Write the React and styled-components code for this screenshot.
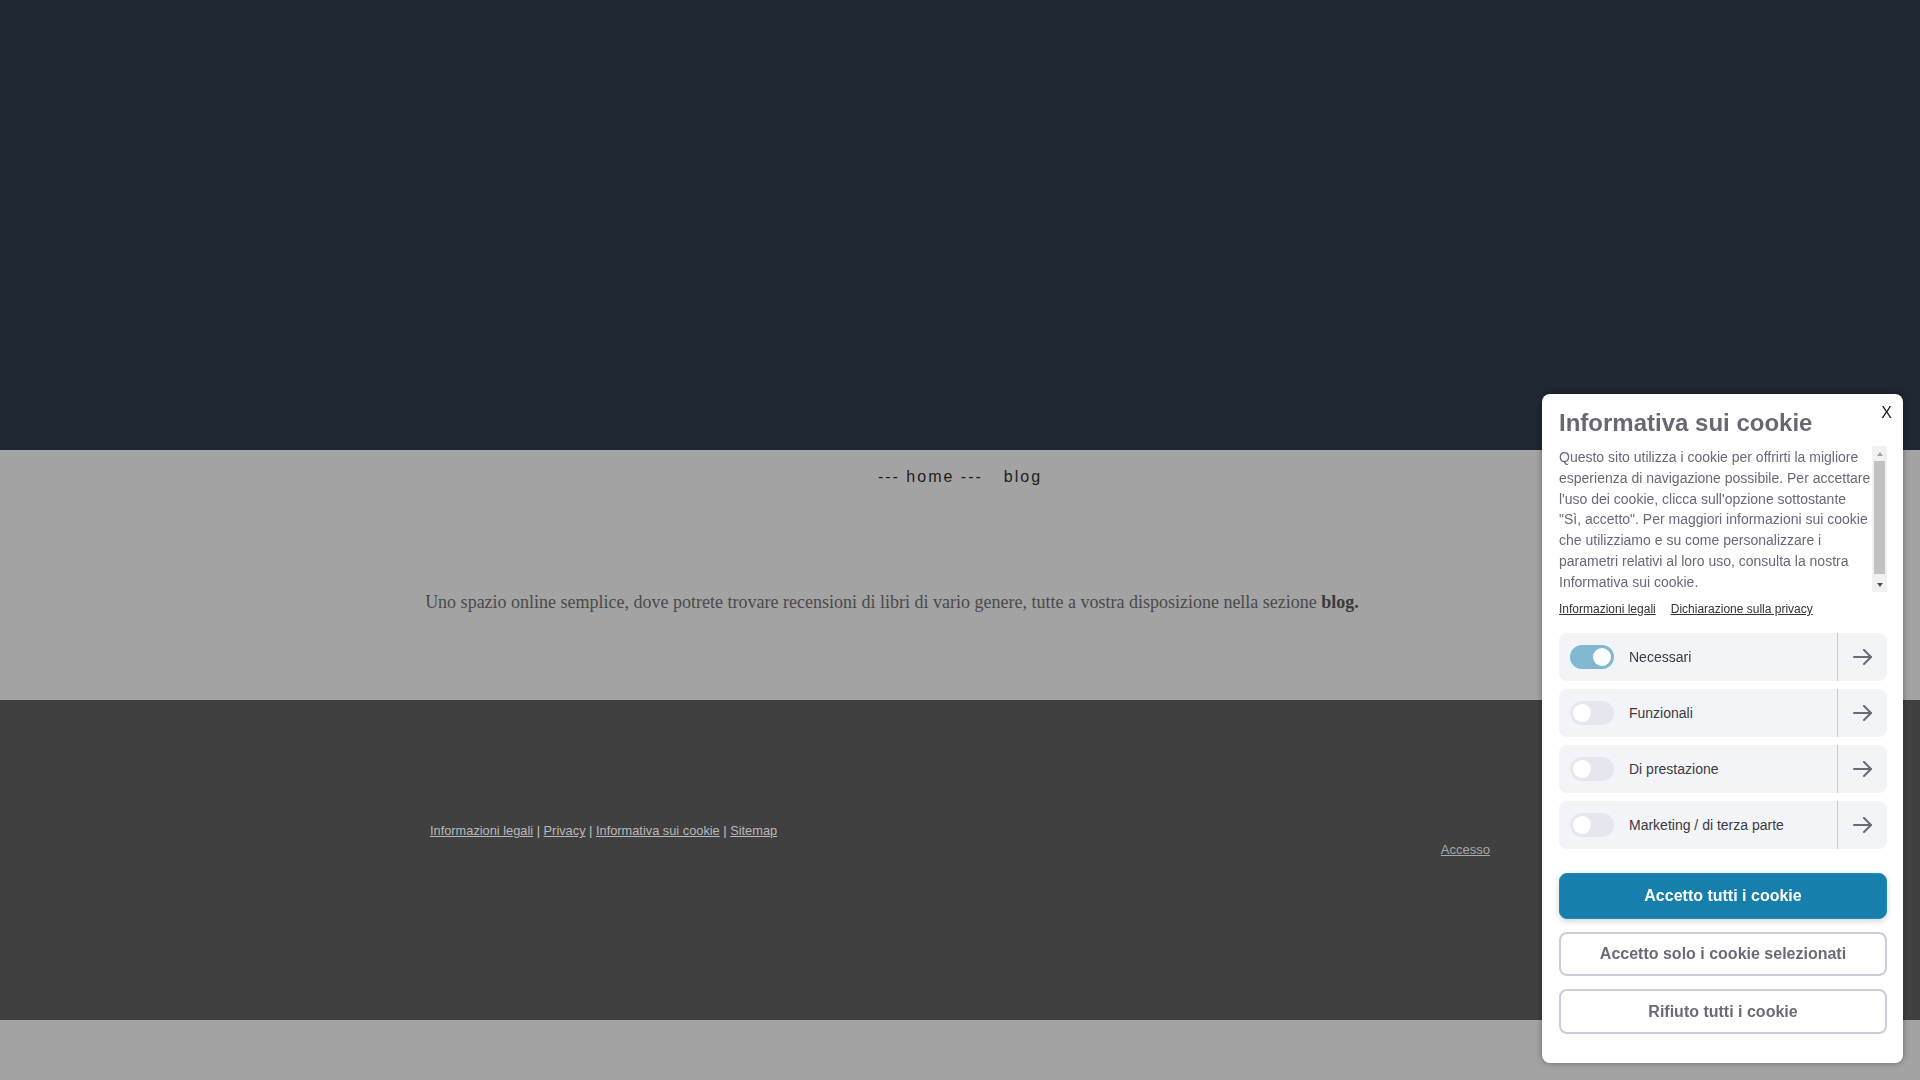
import React from "react";
import styled, { createGlobalStyle } from "styled-components";

const Global = createGlobalStyle`
  html, body { margin: 0; padding: 0; }
  body {
    background: #a3a3a3;
    font-family: "Liberation Sans", Arial, sans-serif;
    min-height: 100vh;
  }
`;

const Page = styled.div`
  display: flex;
  flex-direction: column;
`;

const Header = styled.header`
  height: 450px;
  background: #1e2732;
`;

const Band = styled.section`
  height: 250px;
  background: #a3a3a3;
  display: flex;
  flex-direction: column;
  align-items: center;
`;

const Nav = styled.nav`
  display: flex;
  gap: 21px;
  padding-top: 17px;
`;

const NavItem = styled.a`
  font-family: "Liberation Sans", Arial, sans-serif;
  font-size: 16px;
  line-height: 20px;
  letter-spacing: 2px;
  color: #1c1c1c;
  text-decoration: none;
`;

const Container = styled.div`
  width: 1060px;
  margin: 0 auto;
`;

const Intro = styled.p`
  margin: 102px 0 0 -9px;
  width: 942px;
  text-align: center;
  font-family: "Liberation Serif", "Times New Roman", serif;
  font-size: 18px;
  line-height: 27px;
  color: #4a4a4a;
  white-space: nowrap;

  b { color: #3a3a3a; }
`;

const Footer = styled.footer`
  height: 320px;
  background: #404040;
  padding-top: 123px;
  box-sizing: border-box;
`;

const FooterLinks = styled.div`
  font-size: 12.8px;
  line-height: 16px;
  color: #c4c4c4;
`;

const FooterLink = styled.a`
  color: #b8b8b8;
  text-decoration: underline;
`;

const Login = styled.div`
  margin-top: 3px;
  text-align: right;
  font-size: 13px;
  line-height: 16px;

  a { color: #a8a8a8; text-decoration: underline; }
`;

const Popup = styled.div`
  position: fixed;
  right: 17px;
  bottom: 17px;
  width: 361px;
  height: 669px;
  box-sizing: border-box;
  background: #fff;
  border-radius: 8px;
  box-shadow: 0 0 6px rgba(0, 0, 0, 0.35);
  padding: 14px 16px 0 17px;
  display: flex;
  flex-direction: column;
`;

const Close = styled.button`
  position: absolute;
  top: 6px;
  right: 7px;
  border: none;
  background: none;
  font-family: "Liberation Sans", Arial, sans-serif;
  font-size: 16px;
  color: #1c1c1c;
  padding: 4px;
  cursor: pointer;
`;

const Title = styled.h2`
  margin: 0;
  font-size: 24px;
  line-height: 30px;
  font-weight: 700;
  color: #686873;
`;

const BodyWrap = styled.div`
  margin-top: 8px;
  width: 328px;
  height: 146px;
  display: flex;
`;

const BodyText = styled.div`
  flex: 1;
  overflow: hidden;
  padding-top: 1px;
  font-size: 14px;
  line-height: 20.8px;
  color: #68687a;
`;

const Scrollbar = styled.div`
  width: 15px;
  flex: none;
  display: flex;
  flex-direction: column;
  background: #f1f1f1;
`;

const ScrollBtn = styled.span`
  height: 15px;
  flex: none;
  display: flex;
  align-items: center;
  justify-content: center;

  &::after {
    content: "";
    width: 0;
    height: 0;
    border-left: 3.5px solid transparent;
    border-right: 3.5px solid transparent;
    ${(p) =>
      p.$down
        ? "border-top: 4px solid #505050;"
        : "border-bottom: 4px solid #a3a3a3;"}
  }
`;

const Track = styled.div`
  flex: 1;
  padding: 0 2px 3px;
  display: flex;
`;

const Thumb = styled.div`
  flex: 1;
  background: #c1c1c1;
`;

const Links = styled.div`
  display: flex;
  gap: 15px;
  margin-top: 10px;
  font-size: 12px;
  line-height: 15px;

  a { color: #333; text-decoration: underline; }
`;

const Categories = styled.div`
  display: flex;
  flex-direction: column;
  gap: 8px;
  margin-top: 16px;
  width: 328px;
`;

const Row = styled.div`
  height: 48px;
  display: flex;
  align-items: center;
  background: #f3f4f8;
  border-radius: 8px;
`;

const Toggle = styled.span`
  width: 44px;
  height: 24px;
  border-radius: 12px;
  margin-left: 11px;
  flex: none;
  background: ${(p) => (p.$on ? "#80b8d0" : "#e6e6ef")};
  display: flex;
  align-items: center;
  justify-content: ${(p) => (p.$on ? "flex-end" : "flex-start")};
  padding: 0 3px;
  box-sizing: border-box;

  &::after {
    content: "";
    width: 18px;
    height: 18px;
    border-radius: 50%;
    background: #fff;
  }
`;

const Label = styled.span`
  flex: 1;
  margin-left: 15px;
  font-size: 14px;
  color: #3a3a3f;
`;

const Arrow = styled.span`
  width: 50px;
  height: 48px;
  border-left: 1px solid #c8c8d2;
  box-sizing: border-box;
  display: flex;
  align-items: center;
  justify-content: center;
  color: #6b6b76;
`;

const Buttons = styled.div`
  display: flex;
  flex-direction: column;
  gap: 13px;
  margin-top: 24px;
  width: 328px;
`;

const Button = styled.button`
  height: ${(p) => (p.$primary ? "46px" : "44px")};
  border-radius: 8px;
  box-sizing: border-box;
  font-family: "Liberation Sans", Arial, sans-serif;
  font-size: 16px;
  font-weight: 700;
  cursor: pointer;
  color: ${(p) => (p.$primary ? "#fff" : "#6b6b76")};
  background: ${(p) => (p.$primary ? "#167fab" : "#fff")};
  border: ${(p) => (p.$primary ? "1px solid #1a8cc0" : "2px solid #cbcdda")};
  box-shadow: ${(p) => (p.$primary ? "0 2px 6px rgba(0,0,0,0.18)" : "none")};

  &:last-child {
    height: 45px;
  }
`;

const ArrowIcon = () => (
  <svg width="20" height="16" viewBox="0 0 20 16" fill="none" stroke="currentColor" strokeWidth="2" strokeLinecap="round" strokeLinejoin="round">
    <path d="M1 8h17" />
    <path d="M11 1l7 7-7 7" />
  </svg>
);

const categories = [
  { label: "Necessari", on: true },
  { label: "Funzionali", on: false },
  { label: "Di prestazione", on: false },
  { label: "Marketing / di terza parte", on: false },
];

export default function App() {
  return (
    <>
      <Global />
      <Page>
        <Header />
        <Band>
          <Nav>
            <NavItem href="#">--- home ---</NavItem>
            <NavItem href="#">blog</NavItem>
          </Nav>
          <Container>
            <Intro>
              Uno spazio online semplice, dove potrete trovare recensioni di libri di vario genere, tutte a vostra disposizione nella sezione <b>blog.</b>
            </Intro>
          </Container>
        </Band>
        <Footer>
          <Container>
            <FooterLinks>
              <FooterLink href="#">Informazioni legali</FooterLink> | <FooterLink href="#">Privacy</FooterLink> |{" "}
              <FooterLink href="#">Informativa sui cookie</FooterLink> | <FooterLink href="#">Sitemap</FooterLink>
            </FooterLinks>
            <Login>
              <a href="#">Accesso</a>
            </Login>
          </Container>
        </Footer>
      </Page>
      <Popup>
        <Close>X</Close>
        <Title>Informativa sui cookie</Title>
        <BodyWrap>
          <BodyText>
            Questo sito utilizza i cookie per offrirti la migliore esperienza di navigazione possibile. Per accettare l'uso dei cookie, clicca sull'opzione sottostante "Sì, accetto". Per maggiori informazioni sui cookie che utilizziamo e su come personalizzare i parametri relativi al loro uso, consulta la nostra Informativa sui cookie.
          </BodyText>
          <Scrollbar>
            <ScrollBtn />
            <Track>
              <Thumb />
            </Track>
            <ScrollBtn $down />
          </Scrollbar>
        </BodyWrap>
        <Links>
          <a href="#">Informazioni legali</a>
          <a href="#">Dichiarazione sulla privacy</a>
        </Links>
        <Categories>
          {categories.map((c) => (
            <Row key={c.label}>
              <Toggle $on={c.on} />
              <Label>{c.label}</Label>
              <Arrow>
                <ArrowIcon />
              </Arrow>
            </Row>
          ))}
        </Categories>
        <Buttons>
          <Button $primary>Accetto tutti i cookie</Button>
          <Button>Accetto solo i cookie selezionati</Button>
          <Button>Rifiuto tutti i cookie</Button>
        </Buttons>
      </Popup>
    </>
  );
}
